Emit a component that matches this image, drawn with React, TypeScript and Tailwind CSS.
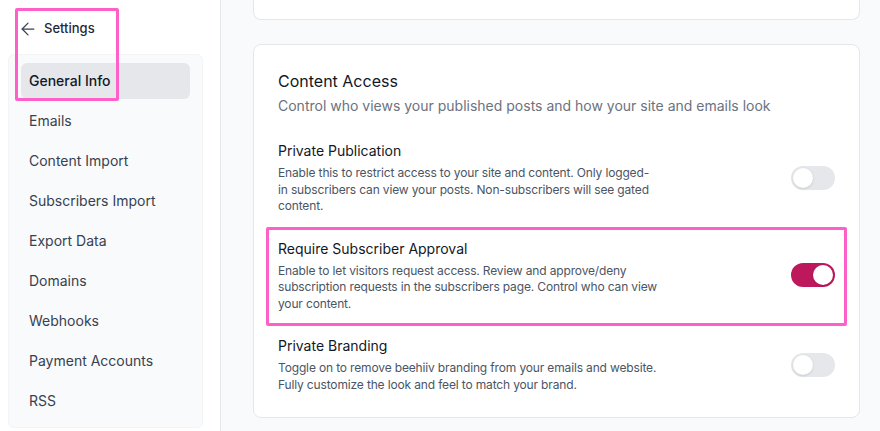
import { ArrowLeft } from "lucide-react";
import { useState } from "react";

const navItems = [
  "General Info",
  "Emails",
  "Content Import",
  "Subscribers Import",
  "Export Data",
  "Domains",
  "Webhooks",
  "Payment Accounts",
  "RSS",
];

interface ToggleProps {
  on: boolean;
  onChange: (v: boolean) => void;
}

function Toggle({ on, onChange }: ToggleProps) {
  return (
    <button
      type="button"
      onClick={() => onChange(!on)}
      className={`relative shrink-0 w-11 h-6 rounded-full transition-colors ${
        on ? "bg-[#be185d]" : "bg-[#e5e7eb]"
      }`}
    >
      <span
        className={`absolute top-[2px] w-5 h-5 rounded-full bg-white shadow-sm transition-all ${
          on ? "left-[22px]" : "left-[2px]"
        }`}
      />
    </button>
  );
}

interface RowProps {
  title: string;
  description: string;
  on: boolean;
  onChange: (v: boolean) => void;
  highlight?: boolean;
}

function SettingRow({ title, description, on, onChange, highlight }: RowProps) {
  return (
    <div className="relative flex items-center justify-between">
      <div className="w-[379px]">
        <div className="text-sm leading-5 text-[#111827]">{title}</div>
        <p className="mt-1 text-xs leading-[16.5px] tracking-[-0.15px] text-[#4b5563]">{description}</p>
      </div>
      <Toggle on={on} onChange={onChange} />
      {/* annotation box */}
      {highlight && (
        <div className="absolute -left-3 -right-3 -top-3 -bottom-[14px] border-[3px] border-[#ff5fc8] rounded-[2px] pointer-events-none" />
      )}
    </div>
  );
}

export default function App() {
  const [privatePub, setPrivatePub] = useState(false);
  const [approval, setApproval] = useState(true);
  const [branding, setBranding] = useState(false);

  return (
    <div
      className="flex w-[880px] h-[431px] overflow-hidden bg-[#f9fafb]"
      style={{ fontFamily: "Inter, 'Noto Sans', sans-serif" }}
    >
      {/* Sidebar */}
      <aside className="relative w-[221px] shrink-0 bg-white border-r border-[#e5e7eb] pl-2 pr-[17px]">
        <div className="flex items-center h-[54px] pl-[10px] pt-[4px] gap-[6px]">
          <ArrowLeft size={20} strokeWidth={1.5} className="text-[#374151]" />
          <span className="text-[13px] font-medium text-[#1f2937]">Settings</span>
        </div>
        <nav className="flex flex-col gap-1 px-3 pt-2 pb-2 bg-[#f9fafb] border border-[#f3f4f6] rounded-md">
          {navItems.map((item, i) => (
            <div
              key={item}
              className={`h-9 flex items-center px-2 rounded-md text-sm ${
                i === 0 ? "bg-[#e5e7eb] text-[#111827] font-medium" : "text-[#374151]"
              }`}
            >
              {item}
            </div>
          ))}
        </nav>
        {/* annotation box */}
        <div className="absolute left-[15px] top-2 w-[104px] h-[93px] border-[3px] border-[#ff5fc8] rounded-[2px] pointer-events-none" />
      </aside>

      {/* Main */}
      <main className="flex-1 pl-8 pr-5">
        <div className="h-[20px] bg-white border-x border-b border-[#e5e7eb] rounded-b-lg" />
        <section className="mt-6 bg-white border border-[#e5e7eb] rounded-lg p-6">
          <h2 className="text-base leading-6 text-[#111827]">Content Access</h2>
          <p className="mt-[3px] text-sm leading-5 text-[#6b7280]">
            Control who views your published posts and how your site and emails look
          </p>
          <div className="mt-[25px] flex flex-col gap-6">
            <SettingRow
              title="Private Publication"
              description="Enable this to restrict access to your site and content. Only logged-in subscribers can view your posts. Non-subscribers will see gated content."
              on={privatePub}
              onChange={setPrivatePub}
            />
            <SettingRow
              title="Require Subscriber Approval"
              description="Enable to let visitors request access. Review and approve/deny subscription requests in the subscribers page. Control who can view your content."
              on={approval}
              onChange={setApproval}
              highlight
            />
            <SettingRow
              title="Private Branding"
              description="Toggle on to remove beehiiv branding from your emails and website. Fully customize the look and feel to match your brand."
              on={branding}
              onChange={setBranding}
            />
          </div>
        </section>
      </main>
    </div>
  );
}
